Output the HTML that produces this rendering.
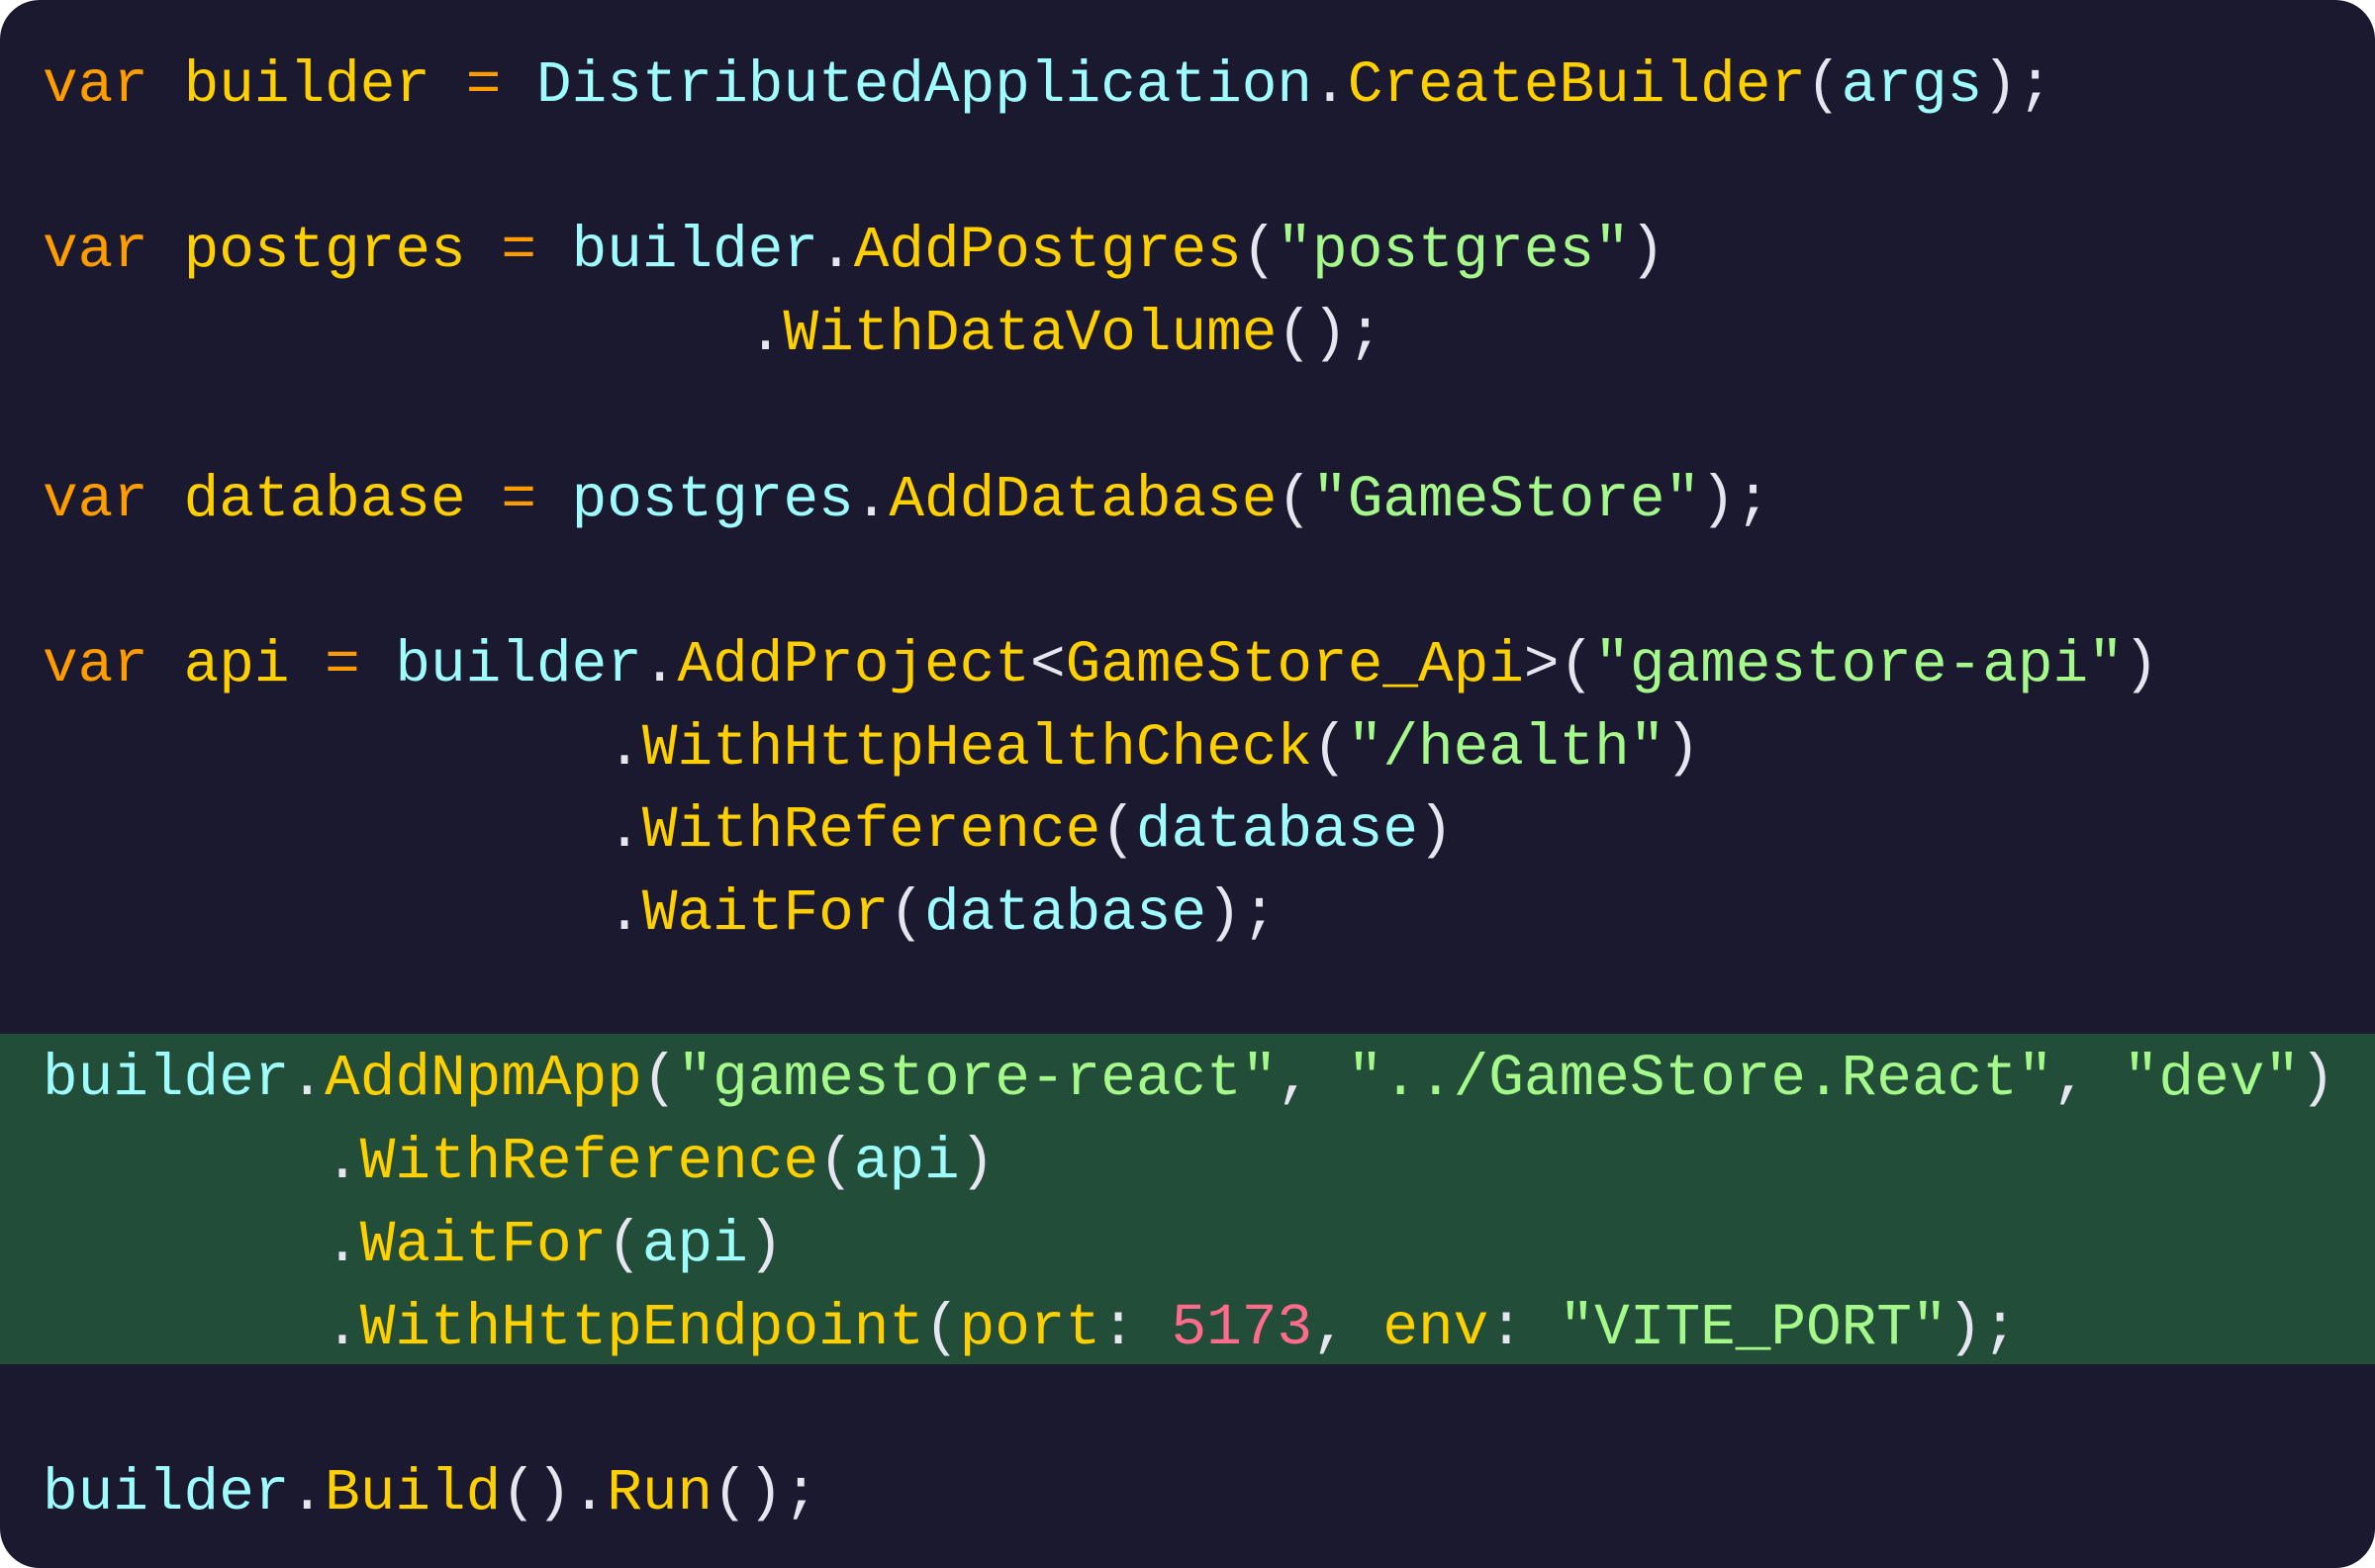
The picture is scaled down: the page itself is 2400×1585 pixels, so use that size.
<!DOCTYPE html>
<html><head><style>
html,body{margin:0;padding:0;background:#fff;}
.card{position:absolute;left:0;top:0;width:2400px;height:1585px;background:#1b1930;border-radius:40px;overflow:hidden;}
.band{position:absolute;left:0;top:1045px;width:2400px;height:334px;background:#224d38;}
pre{position:absolute;left:43px;top:45px;margin:0;font-family:"Liberation Mono",monospace;font-size:59.4px;line-height:83.7px;color:#e6e6f0;white-space:pre;}
.k{color:#ff9d00}.y{color:#ffd000}.c{color:#9ffcfc}.g{color:#a5f88a}.p{color:#ff6b8a}.w{color:#e6e6f0}
</style></head><body>
<div class="card"><div class="band"></div>
<pre><span class="k">var</span> <span class="y">builder</span> <span class="k">=</span> <span class="c">DistributedApplication</span>.<span class="y">CreateBuilder</span>(<span class="c">args</span>);

<span class="k">var</span> <span class="y">postgres</span> <span class="k">=</span> <span class="c">builder</span>.<span class="y">AddPostgres</span>(<span class="g">"postgres"</span>)
                    .<span class="y">WithDataVolume</span>();

<span class="k">var</span> <span class="y">database</span> <span class="k">=</span> <span class="c">postgres</span>.<span class="y">AddDatabase</span>(<span class="g">"GameStore"</span>);

<span class="k">var</span> <span class="y">api</span> <span class="k">=</span> <span class="c">builder</span>.<span class="y">AddProject</span>&lt;<span class="y">GameStore_Api</span>&gt;(<span class="g">"gamestore-api"</span>)
                .<span class="y">WithHttpHealthCheck</span>(<span class="g">"/health"</span>)
                .<span class="y">WithReference</span>(<span class="c">database</span>)
                .<span class="y">WaitFor</span>(<span class="c">database</span>);

<span class="c">builder</span>.<span class="y">AddNpmApp</span>(<span class="g">"gamestore-react"</span>, <span class="g">"../GameStore.React"</span>, <span class="g">"dev"</span>)
        .<span class="y">WithReference</span>(<span class="c">api</span>)
        .<span class="y">WaitFor</span>(<span class="c">api</span>)
        .<span class="y">WithHttpEndpoint</span>(<span class="y">port</span>: <span class="p">5173</span>, <span class="y">env</span>: <span class="g">"VITE_PORT"</span>);

<span class="c">builder</span>.<span class="y">Build</span>().<span class="y">Run</span>();</pre>
</div>
</body></html>
